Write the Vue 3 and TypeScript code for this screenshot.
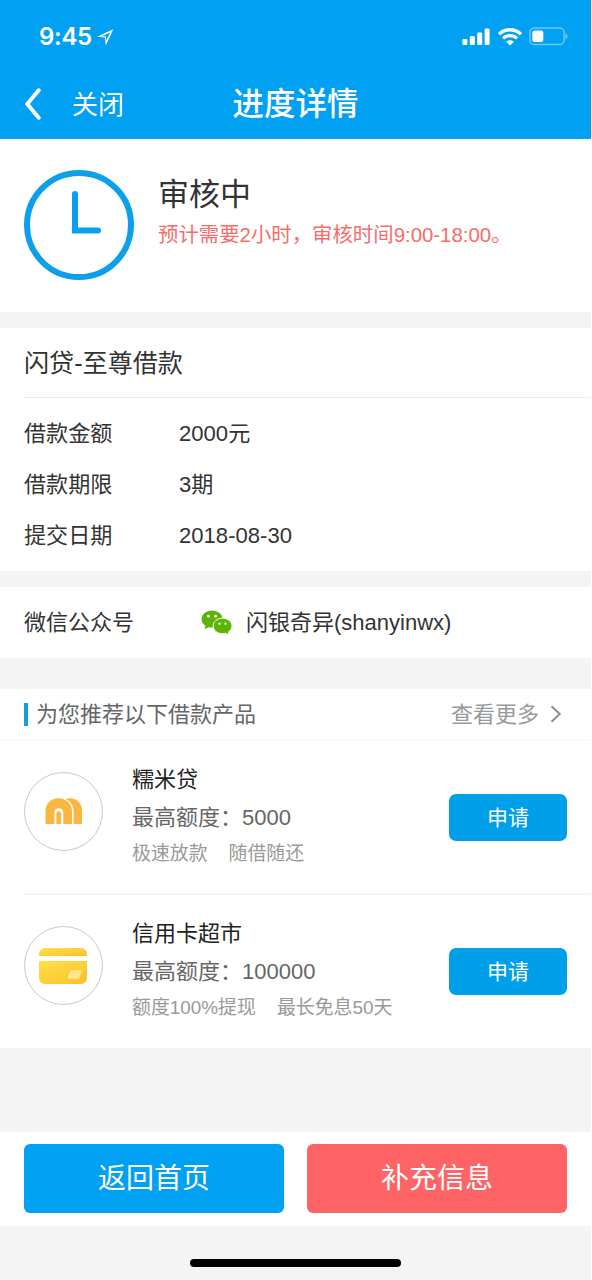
<script setup lang="ts">
interface Detail {
  label: string
  value: string
}

interface Product {
  id: 'rice' | 'card'
  name: string
  limit: string
  tags: string[]
}

const details: Detail[] = [
  { label: '借款金额', value: '2000元' },
  { label: '借款期限', value: '3期' },
  { label: '提交日期', value: '2018-08-30' },
]

const products: Product[] = [
  { id: 'rice', name: '糯米贷', limit: '5000', tags: ['极速放款', '随借随还'] },
  { id: 'card', name: '信用卡超市', limit: '100000', tags: ['额度100%提现', '最长免息50天'] },
]
</script>

<template>
  <div class="screen">
    <header class="top">
      <div class="statusbar">
        <div class="clock">
          <span>9:45</span>
          <svg class="loc" width="18" height="18" viewBox="0 0 18 18">
            <path fill-rule="evenodd" d="M.8 8.800 17.300 1.200 9.800 17.600 8.900 9.500ZM6 8.300 9.900 8.200 10.300 12.300 14.400 4.300Z" fill="#fff" />
          </svg>
        </div>
        <div class="indicators">
          <svg width="28" height="18" viewBox="0 0 28 18" fill="#fff">
            <rect x="0.4" y="11" width="5" height="6" rx="1.3" />
            <rect x="7.8" y="8" width="5" height="9" rx="1.3" />
            <rect x="15.2" y="4.5" width="5" height="12.500" rx="1.3" />
            <rect x="22.600" y="0.500" width="5" height="16.500" rx="1.3" />
          </svg>
          <svg class="wifi" width="26" height="18" viewBox="0 0 26 18">
            <path d="M2 6.200A16 16 0 0 1 24 6.200" fill="none" stroke="#fff" stroke-width="3.400" />
            <path d="M6 10.400A10.300 10.300 0 0 1 20 10.400" fill="none" stroke="#fff" stroke-width="3.200" />
            <path d="M13 17.400 9.200 13.700A5.600 5.600 0 0 1 16.800 13.700Z" fill="#fff" />
          </svg>
          <svg class="battery" width="39" height="19" viewBox="0 0 39 19">
            <rect x="0.900" y="1" width="34.200" height="16.600" rx="4.400" fill="none" stroke="#fff" stroke-opacity="0.42" stroke-width="1.500" />
            <rect x="3.300" y="3.600" width="11" height="11.400" rx="2" fill="#fff" />
            <path d="M36.500 6.200q2 .9 2 3.100t-2 3.100z" fill="#fff" fill-opacity="0.45" />
          </svg>
        </div>
      </div>
      <nav class="navbar">
        <div class="nav-left">
          <svg width="17" height="33" viewBox="0 0 17 33">
            <path d="M14.700 2.300 3.200 16 14.700 29.700" fill="none" stroke="#fff" stroke-width="4" stroke-linecap="round" stroke-linejoin="round" />
          </svg>
          <span class="close">关闭</span>
        </div>
        <h1 class="title">进度详情</h1>
      </nav>
    </header>

    <section class="status">
      <svg width="110" height="110" viewBox="0 0 110 110">
        <circle cx="55" cy="55" r="52" fill="none" stroke="#0b9fec" stroke-width="6" />
        <path d="M48 24a3 3 0 0 1 6 0V57.500H74a3 3 0 0 1 0 6H48Z" fill="#0b9fec" />
      </svg>
      <div class="status-text">
        <h2>审核中</h2>
        <p>预计需要2小时，审核时间9:00-18:00。</p>
      </div>
    </section>

    <section class="loan">
      <h3>闪贷-至尊借款</h3>
      <dl>
        <div v-for="d in details" :key="d.label" class="row">
          <dt>{{ d.label }}</dt>
          <dd>{{ d.value }}</dd>
        </div>
      </dl>
    </section>

    <section class="wechat">
      <span class="wechat-label">微信公众号</span>
      <svg width="32" height="26" viewBox="0 0 32 26">
        <path d="M11 .6C5.200.6.600 4.300.600 9.200c0 2.800 1.500 5.100 3.900 6.700L3.600 19.300l4-2.100c1.100.3 2.300.4 3.400.4 5.900 0 10.500-3.700 10.500-8.400S16.900.6 11 .6Z" fill="#5bb406" />
        <path d="M21.500 8.200c-5.200 0-9.300 3.400-9.300 7.700s4.100 7.900 9.300 7.900c1.100 0 2.100-.2 3.100-.5l3.700 1.900-.9-3.100c2.100-1.400 3.600-3.600 3.600-6.200 0-4.300-4.200-7.700-9.500-7.700Z" fill="#5bb406" stroke="#fff" stroke-width="1" />
        <g fill="#fff">
          <circle cx="7.400" cy="6.200" r="1.400" /><circle cx="14.600" cy="6.200" r="1.400" />
          <circle cx="18.500" cy="13.600" r="1.200" /><circle cx="24.500" cy="13.600" r="1.200" />
        </g>
      </svg>
      <span class="wechat-name">闪银奇异(shanyinwx)</span>
    </section>

    <section class="recommend">
      <div class="rec-head">
        <i class="bar"></i>
        <span class="rec-title">为您推荐以下借款产品</span>
        <span class="more">查看更多</span>
        <svg width="12" height="18" viewBox="0 0 12 18">
          <path d="M1.500 1.200 9.800 9 1.500 16.800" fill="none" stroke="#8c8c8c" stroke-width="1.900" />
        </svg>
      </div>
      <article v-for="p in products" :key="p.id" class="product">
        <div class="logo">
          <svg v-if="p.id === 'rice'" width="38" height="27" viewBox="0 0 38 27">
            <path d="M20 1.100C21.800.4 23.500.200 25 .200c7 0 12 5 12 12V26H28.600V13.500C28.600 7.500 25.500 3 20 1.100Z" fill="#fbb63f" />
            <path d="M.500 26V13C.500 5.500 6 .300 13.500.300 21.500.300 27 5.500 27 13V26H18.300V14.500C18.300 11.600 16.300 10.200 13.800 10.200S9.400 11.600 9.400 14.500V26Z" fill="#fbb63f" />
            <path d="M11.300 26V15.700a2.400 2.400 0 0 1 4.800 0V26Z" fill="#fbb63f" />
            <path d="M19 1.100C24.500 3 27.600 7.500 27.600 13.500V26" fill="none" stroke="#fff" stroke-width="0.900" />
          </svg>
          <svg v-else class="card-icon" width="48" height="36" viewBox="0 0 48 36">
            <defs>
              <linearGradient id="gold" x1="0" y1="0" x2="1" y2="1">
                <stop offset="0" stop-color="#ffe04a" />
                <stop offset="1" stop-color="#fac02a" />
              </linearGradient>
            </defs>
            <path d="M0 8V6a6 6 0 0 1 6-6H42a6 6 0 0 1 6 6V8Z" fill="url(#gold)" />
            <path d="M0 13H48V30a6 6 0 0 1-6 6H6a6 6 0 0 1-6-6Z" fill="url(#gold)" />
            <path d="M32.500 22.200H42.300q1 0 .6 1l-2.600 6.600q-.4 1-1.400 1H29q-1 0-.6-1l2.700-6.600q.4-1 1.400-1Z" fill="#ffe88c" />
          </svg>
        </div>
        <div class="info">
          <div class="name">{{ p.name }}</div>
          <div class="limit">最高额度：<span>{{ p.limit }}</span></div>
          <div class="tags"><span v-for="t in p.tags" :key="t">{{ t }}</span></div>
        </div>
        <button class="apply" type="button">申请</button>
      </article>
    </section>

    <footer class="actions">
      <button class="home" type="button">返回首页</button>
      <button class="supply" type="button">补充信息</button>
    </footer>
    <div class="home-indicator"></div>
  </div>
</template>

<style>
body {
  background: #fff;
}
</style>

<style scoped>
.screen {
  width: 591px;
  height: 1280px;
  box-sizing: border-box;
  display: flex;
  flex-direction: column;
  overflow: hidden;
  background: #f4f4f4;
  color: #333;
  font-family: "Liberation Sans", "Noto Sans CJK SC", sans-serif;
}
h1, h2, h3, p, dl, dd { margin: 0; font-weight: 400; }
svg { display: block; flex: none; }
button { border: 0; padding: 0; font-family: inherit; color: #fff; }
section, header, footer { flex: none; box-sizing: border-box; }

.top { height: 139px; background: #00a0f3; color: #fff; }
.statusbar {
  height: 70px;
  box-sizing: border-box;
  padding: 3px 23px 0 39px;
  display: flex;
  align-items: center;
  justify-content: space-between;
}
.clock { display: flex; align-items: center; gap: 5px; font: 600 24px/30px Inter, sans-serif; }
.clock span { width: 52px; white-space: nowrap; letter-spacing: -0.3px; }
.indicators { display: flex; align-items: center; }
.wifi { margin-left: 7px; }
.battery { margin-left: 6px; }
.navbar { height: 69px; display: grid; grid-template-columns: 1fr auto 1fr; align-items: center; }
.nav-left { display: flex; align-items: center; padding-left: 24px; gap: 31px; }
.close { font-size: 26px; line-height: 40px; }
.title { padding-bottom: 8px; font-size: 31.5px; line-height: 46px; font-weight: 500; font-family: "Noto Sans CJK SC", sans-serif; }

.status { height: 173px; padding: 31px 24px 0; display: flex; gap: 24px; background: #fff; }
.status-text { padding-top: 1px; }
.status h2 { font-size: 31px; line-height: 48px; color: #333; }
.status p { font-size: 20.4px; line-height: 32px; color: #f76c6c; white-space: nowrap; }

.loan { height: 243px; margin-top: 16px; padding-left: 24px; background: #fff; }
.loan h3 { height: 70px; box-sizing: border-box; border-bottom: 1px solid #ededed; font-size: 25.1px; line-height: 71px; }
.loan dl { padding-top: 10px; }
.row { display: flex; height: 51px; line-height: 52px; font-size: 22.1px; }
.row dt { width: 155px; }

.wechat { height: 71px; margin-top: 16px; padding-left: 24px; display: flex; align-items: center; background: #fff; font-size: 22px; line-height: 71px; }
.wechat-label { width: 177px; }
.wechat-name { margin-left: 13px; }

.recommend { height: 359px; margin-top: 31px; background: #fff; }
.rec-head { height: 52px; box-sizing: border-box; padding: 0 29px 0 24px; display: flex; align-items: center; border-bottom: 2px solid #f7f7f7; font-size: 22px; line-height: 50px; }
.bar { width: 4px; height: 23px; background: #149fd8; }
.rec-title { margin-left: 8px; padding-top: 2px; color: #666; }
.more { margin-left: auto; margin-right: 11px; padding-top: 2px; color: #999; }
.product { height: 154px; box-sizing: border-box; margin-left: 24px; padding-right: 24px; display: flex; align-items: flex-start; }
.product + .product { border-top: 2px solid #f5f5f5; height: 155px; }
.product:nth-of-type(1) { height: 152px; }
.logo { width: 79px; height: 79px; margin-top: 31px; box-sizing: border-box; border: 1px solid #c8c8c8; border-radius: 50%; display: flex; align-items: center; justify-content: center; }
.card-icon { margin-right: 1px; }
.info { margin-left: 29px; padding-top: 20px; flex: 1; white-space: nowrap; }
.name { font-size: 22px; line-height: 38px; color: #222; }
.limit { font-size: 22px; line-height: 38px; color: #666; }
.tags { display: flex; gap: 21px; font-size: 18.9px; line-height: 34px; color: #999; }
.apply { width: 118px; height: 47px; margin-top: 53px; border-radius: 7px; background: #009fe9; font-size: 21px; line-height: 47px; }

.actions { height: 94px; margin-top: 84px; padding: 12px 24px 13px; display: flex; gap: 23px; background: #fff; }
.actions button { flex: 1; padding-top: 1px; border-radius: 6px; font-size: 28px; line-height: 68px; }
.home { background: #00a0f3; }
.supply { background: #fe6466; }
.home-indicator { width: 211px; height: 8px; margin: 33px auto 0; border-radius: 4px; background: #000; flex: none; }
</style>
